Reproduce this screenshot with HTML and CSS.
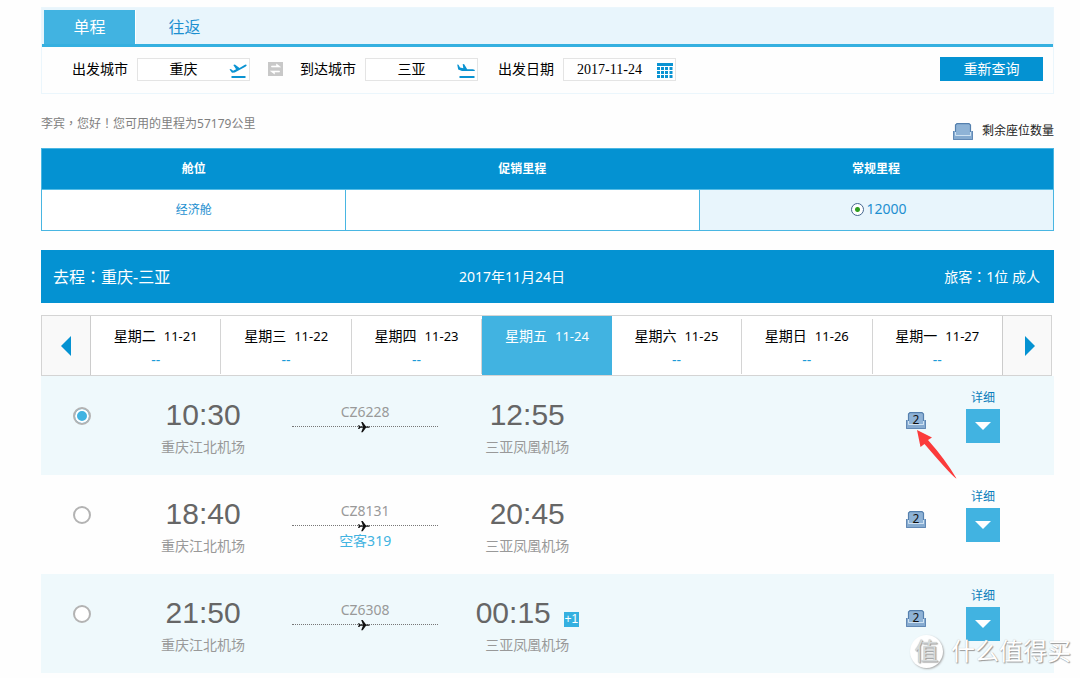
FILE: index.html
```html
<!DOCTYPE html>
<html lang="zh-CN">
<head>
<meta charset="utf-8">
<title>里程兑换航班查询</title>
<link rel="stylesheet" href="styles.css">
</head>
<body>
<svg class="sprites" width="0" height="0" aria-hidden="true">
  <symbol id="seat" viewBox="0 0 20 17">
    <path d="M3.500.5h12.500l1.500 1.500v11h-15.500V2z" fill="#8fb3d6"/>
    <path d="M2.500 9V2L4 .6h12L17.500 2v7" fill="none" stroke="#5580ae" stroke-width="1.200"/>
    <path d="M0 8h2v5h16V8h2v9H0z" fill="#86abd0"/>
    <path d="M.5 8v8.500h19V8" fill="none" stroke="#6289b5" stroke-width="1"/>
    <path d="M2.500 9v3.500h15V9" fill="none" stroke="#cfe2f2" stroke-width="1"/>
  </symbol>
  <symbol id="plane" viewBox="0 0 12 12">
    <path d="M0 4.200h1.200l1.300 1.300h2.400L3.200 1h1.500l3.300 4.500h2.500q1.300 0 1.500.6q-.2.700-1.500.7H8L4.700 11.200H3.200L4.900 6.800H2.500L1.200 8H0l.8-1.900z" fill="#111"/>
  </symbol>
</svg>
<main class="page">
  <section class="search">
    <nav class="tabs">
      <button class="tab tab-active" type="button">单程</button>
      <button class="tab" type="button">往返</button>
    </nav>
    <form class="query">
      <label for="from">出发城市</label>
      <span class="field">
        <input id="from" type="text" value="重庆">
        <svg class="field-icon" width="18" height="16" viewBox="0 0 18 16" aria-hidden="true"><path d="M.5 6.500l1.300-.5 2.300 1.700 3-1.500L4.300 2l1.600-.6L10.500 4.900 15.500 2q1.700-.8 2.200.1.200.8-1.300 1.700L5.700 9.400 3 9.800z M2.500 13h14v2h-14z" fill="#0a93d2"/></svg>
      </span>
      <button class="swap" type="button" aria-label="交换城市">
        <svg width="15" height="14" viewBox="0 0 15 14" aria-hidden="true"><path d="M3.500 4h5V2l4 3h-9zM11.500 10h-5v2l-4-3h9z" fill="#fff" stroke="#fff" stroke-width=".6"/></svg>
      </button>
      <label for="to">到达城市</label>
      <span class="field">
        <input id="to" type="text" value="三亚">
        <svg class="field-icon" width="18" height="16" viewBox="0 0 18 16" aria-hidden="true"><path d="M.2 1.500l1.300.2 1.500 2.800 3.300.8L5.700 1l1.500.3 3 4.900 5.500 0q2.300.3 2.300 1.200-.2.700-2 .7H5L1.200 6.500z M2.500 13h15v2h-15z" fill="#0a93d2"/></svg>
      </span>
      <label for="date">出发日期</label>
      <span class="field">
        <input id="date" type="text" value="2017-11-24">
        <svg class="field-icon" width="16" height="16" viewBox="0 0 16 16" aria-hidden="true"><path d="M0 0h16v3H0z" fill="#0a93d2"/><path d="M1.500 4v11M5.500 4v11M9.500 4v11M14 4v11" stroke="#0a93d2" stroke-width="3" stroke-dasharray="3 1"/></svg>
      </span>
      <button class="submit" type="submit">重新查询</button>
    </form>
  </section>

  <div class="notice">
    <p class="greeting">李宾<span lang="zh-TW" class="punct">，</span>您好<span lang="zh-TW" class="punct">！</span>您可用的里程为57179公里</p>
    <p class="legend"><svg width="20" height="17" aria-hidden="true"><use href="#seat"/></svg>剩余座位数量</p>
  </div>

  <table class="fares">
    <thead><tr><th class="col-cabin">舱位</th><th class="col-fare">促销里程</th><th class="col-fare">常规里程</th></tr></thead>
    <tbody><tr>
      <td class="cabin">经济舱</td><td></td>
      <td class="selected"><label class="fare"><input class="fare-radio" type="radio" name="fare" checked>12000</label></td>
    </tr></tbody>
  </table>

  <header class="trip"><h2>去程<span lang="zh-TW" class="punct">：</span>重庆-三亚</h2><span class="trip-date">2017年11月24日</span><span class="trip-pax">旅客<span lang="zh-TW" class="punct">：</span>1位 成人</span></header>

  <nav class="dates">
    <button class="step" type="button" aria-label="前一周"><svg width="10" height="20" viewBox="0 0 10 20" aria-hidden="true"><path d="M10 0v20L0 10z" fill="#0492d2"/></svg></button>
    <button class="day" type="button"><span class="day-name">星期二<small>11-21</small></span><span class="day-price">--</span></button>
    <button class="day" type="button"><span class="day-name">星期三<small>11-22</small></span><span class="day-price">--</span></button>
    <button class="day" type="button"><span class="day-name">星期四<small>11-23</small></span><span class="day-price">--</span></button>
    <button class="day day-active" type="button"><span class="day-name">星期五<small>11-24</small></span></button>
    <button class="day" type="button"><span class="day-name">星期六<small>11-25</small></span><span class="day-price">--</span></button>
    <button class="day" type="button"><span class="day-name">星期日<small>11-26</small></span><span class="day-price">--</span></button>
    <button class="day" type="button"><span class="day-name">星期一<small>11-27</small></span><span class="day-price">--</span></button>
    <button class="step step-next" type="button" aria-label="后一周"><svg width="10" height="20" viewBox="0 0 10 20" aria-hidden="true"><path d="M0 0v20l10-10z" fill="#0492d2"/></svg></button>
  </nav>

  <ul class="flights">
    <li class="flight">
      <input class="pick" type="radio" name="flight" aria-label="CZ6228" checked>
      <div class="stop"><div class="time">10:30</div><div class="airport">重庆江北机场</div></div>
      <div class="route"><span class="code">CZ6228</span><div class="line"><svg width="12" height="12"><use href="#plane"/></svg></div></div>
      <div class="stop"><div class="time">12:55</div><div class="airport">三亚凤凰机场</div></div>
      <div class="seats"><svg width="20" height="17" aria-hidden="true"><use href="#seat"/></svg><span class="count">2</span>
        <svg class="pointer" width="40" height="50" viewBox="0 0 40 50" aria-hidden="true"><path d="M0 0l15 7.500-4 2.500Q28 29 39.500 48.500 37 48.500 7.500 14L3.500 17z" fill="#fb3b3b"/></svg></div>
      <div class="detail"><a href="#">详细</a><button class="expand" type="button" aria-label="展开"><svg width="16" height="9" viewBox="0 0 16 9"><path d="M0 0h16L8 8z" fill="#fff"/></svg></button></div>
    </li>
    <li class="flight">
      <input class="pick" type="radio" name="flight" aria-label="CZ8131">
      <div class="stop"><div class="time">18:40</div><div class="airport">重庆江北机场</div></div>
      <div class="route"><span class="code">CZ8131</span><div class="line"><svg width="12" height="12"><use href="#plane"/></svg></div><a class="aircraft" href="#">空客319</a></div>
      <div class="stop"><div class="time">20:45</div><div class="airport">三亚凤凰机场</div></div>
      <div class="seats"><svg width="20" height="17" aria-hidden="true"><use href="#seat"/></svg><span class="count">2</span></div>
      <div class="detail"><a href="#">详细</a><button class="expand" type="button" aria-label="展开"><svg width="16" height="9" viewBox="0 0 16 9"><path d="M0 0h16L8 8z" fill="#fff"/></svg></button></div>
    </li>
    <li class="flight">
      <input class="pick" type="radio" name="flight" aria-label="CZ6308">
      <div class="stop"><div class="time">21:50</div><div class="airport">重庆江北机场</div></div>
      <div class="route"><span class="code">CZ6308</span><div class="line"><svg width="12" height="12"><use href="#plane"/></svg></div></div>
      <div class="stop"><div class="time">00:15<span class="plus">+1</span></div><div class="airport">三亚凤凰机场</div></div>
      <div class="seats"><svg width="20" height="17" aria-hidden="true"><use href="#seat"/></svg><span class="count">2</span></div>
      <div class="detail"><a href="#">详细</a><button class="expand" type="button" aria-label="展开"><svg width="16" height="9" viewBox="0 0 16 9"><path d="M0 0h16L8 8z" fill="#fff"/></svg></button></div>
    </li>
  </ul>
</main>
<div class="watermark"><span class="seal">值</span><span>什么值得买</span></div>
</body>
</html>
```
FILE: styles.css
```css
* { box-sizing: border-box; margin: 0; padding: 0; }
body {
  position: relative;
  background: #fefefe;
  color: #000;
  font: 14px/20px "Noto Sans", "Noto Sans CJK SC", sans-serif;
}
button, input { font: inherit; color: inherit; border: 0; background: none; border-radius: 0; }
svg { display: block; flex: none; }
a { text-decoration: none; }
.sprites { position: absolute; }
.punct { font-family: "Noto Sans CJK TC", sans-serif; }
.page { padding: 7px 26px 4px 41px; }

.search { border: 1px solid #ebf6fc; }
.tabs { display: flex; height: 39px; padding: 2px 2px 0; background: #e8f5fc; border-bottom: 3px solid #35b0e0; }
.tab { width: 92px; font-size: 16px; color: #1c8fd0; }
.tab + .tab { width: 97px; }
.tab-active { background: #41b3e1; color: #fff; border-right: 1px solid #fff; }
.query { display: flex; align-items: center; height: 46px; padding: 9px 10px 11px 30px; }
.field { position: relative; width: 113px; height: 23px; margin-left: 9px; border: 1px solid #e4e4e4; background: #fff; }
.field input { display: block; width: 100%; height: 21px; padding-right: 20px; text-align: center; font: 14px/21px "Liberation Serif", "Noto Sans CJK SC", serif; }
.field-icon { position: absolute; right: 2px; top: 4px; }
.swap { width: 15px; height: 14px; margin: 0 17px 0 18px; background: #c8c8c8; }
.field + label { margin-left: 20px; }
.submit { width: 103px; height: 24px; margin-left: auto; background: #0492d2; color: #fff; }

.notice { display: flex; justify-content: space-between; height: 54px; padding-top: 19px; font-size: 12px; }
.greeting { color: #808080; }
.legend { display: flex; align-items: center; gap: 9px; height: 20px; margin-top: 8px; color: #222; }

.fares { width: 100%; table-layout: fixed; border: 1px solid #49b6e2; border-spacing: 0; text-align: center; color: #1c8fd0; }
.fares th { height: 41px; background: #0492d2; color: #fff; font-size: 12px; border-bottom: 1px solid #55bde6; }
.fares td { height: 40px; background: #fff; }
.fares td + td { border-left: 1px solid #49b6e2; }
.fares .cabin { font-size: 12px; }
.fares .selected { background: #e8f5fc; }
.col-cabin { width: 30%; }
.col-fare { width: 35%; }
.fare { display: inline-flex; align-items: center; gap: 3px; padding-left: 4px; }
.fare-radio { appearance: none; width: 13px; height: 13px; border: 1px solid #46678f; border-radius: 50%; background: radial-gradient(circle, #2f9e1f 0 2px, #fff 3px); }

.trip { display: grid; grid-template-columns: 30% 33% 1fr; align-items: center; height: 53px; margin-top: 19px; background: #0492d2; color: #fff; }
.trip h2 { padding-left: 12px; font-size: 16px; font-weight: 400; }
.trip-date { text-align: center; }
.trip-pax { padding-right: 14px; text-align: right; }

.dates { display: flex; height: 61px; margin: 12px 2px 0 0; border: 1px solid #d4d4d4; background: #fff; }
.step { display: flex; align-items: center; justify-content: center; width: 49px; background: #f9f9f9; border-right: 1px solid #ccc; }
.step-next { border-right: 0; border-left: 1px solid #ccc; padding-left: 6px; }
.day { flex: 1; display: flex; flex-direction: column; align-items: center; gap: 4px; margin: 3px 0 1px; padding-top: 7px; border-right: 1px solid #d4d4d4; }
.day:nth-last-child(2) { border-right: 0; }
.day-active { margin: 0; padding-top: 10px; background: #41b3e1; color: #fff; border-right: 0; }
.day-name { display: flex; gap: 8px; }
.day-name small { font-size: 13px; }
.day-price { color: #1c9bd8; }

.flights { list-style: none; }
.flight { display: grid; grid-template-columns: 8% 16% 16% 16% 1fr 118px; height: 99px; text-align: center; color: #999; }
.flight:nth-child(odd) { background: #eff9fc; }
.pick { appearance: none; justify-self: center; width: 18px; height: 18px; margin-top: 31px; border: 2px solid #b3b3b3; border-radius: 50%; background: #fff; }
.pick:checked { background: #41b3e1; box-shadow: inset 0 0 0 2px #fff; }
.stop { padding-top: 21px; }
.time { display: flex; align-items: center; justify-content: center; gap: 13px; margin-bottom: 4px; font: 30px/36px "Liberation Sans", Arial, sans-serif; color: #666; }
.plus { width: 15px; height: 15px; margin-top: 12px; background: #35b0e0; color: #fff; font-size: 12px; line-height: 15px; }
.route { padding: 26px 8px 0; }
.code { display: block; }
.line { position: relative; height: 10px; }
.line::before { content: ""; position: absolute; left: 0; right: 0; top: 4px; border-top: 1px dotted #777; }
.line svg { position: absolute; left: 45%; top: -1px; }
.aircraft { color: #41b3e1; }
.seats { position: relative; justify-self: end; width: 20px; height: 17px; margin: 36px 10px 0 0; }
.count { position: absolute; left: 0; right: 0; top: -1px; font-size: 12px; line-height: 18px; color: #111; }
.pointer { position: absolute; left: 11px; top: 18px; z-index: 1; }
.detail { display: flex; flex-direction: column; align-items: center; padding: 12px 24px 0 0; font-size: 12px; }
.detail a { color: #0b7dbb; }
.expand { display: flex; align-items: center; justify-content: center; width: 34px; height: 34px; margin-top: 1px; background: #41b3e1; }

.watermark { position: absolute; right: 9px; bottom: 8px; display: flex; align-items: center; gap: 8px; font-size: 24px; line-height: 36px; color: #fff; text-shadow: 1px 1px 1px #999, 0 0 1px #bbb; }
.seal { width: 33px; height: 33px; border-radius: 50%; background: #fff; box-shadow: 1px 1px 2px #aaa; line-height: 32px; text-align: center; color: #d5d9da; }
```
